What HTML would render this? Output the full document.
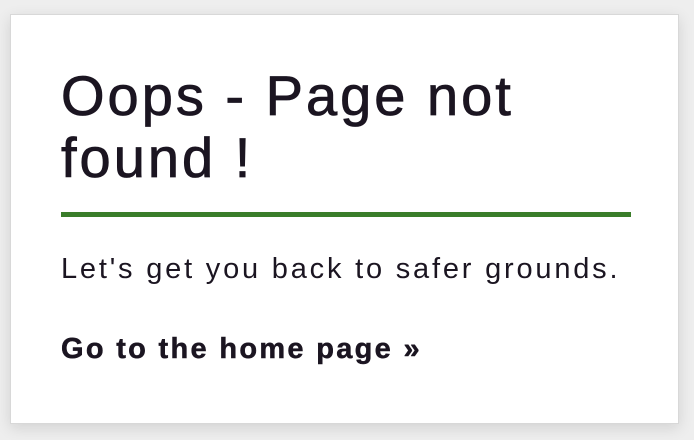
<!DOCTYPE html>
<html><head><style>
html,body{margin:0;padding:0;}
body{width:694px;height:440px;background:#eeeeee;position:relative;overflow:hidden;font-family:"Liberation Sans",sans-serif;color:#1b1521;}
.card{position:absolute;left:10px;top:14px;width:669px;height:410px;background:#fff;border:1px solid #d8d8d8;box-sizing:border-box;box-shadow:0 4px 14px rgba(0,0,0,0.12);}
h1{position:absolute;left:50px;top:50px;margin:0;font-size:56px;font-weight:normal;line-height:62px;letter-spacing:3px;white-space:nowrap;-webkit-text-stroke:0.8px #1b1521;}
.bar{position:absolute;left:50px;top:197px;width:570px;height:5px;background:#3a7d2a;}
p{position:absolute;left:50px;top:238px;margin:0;font-size:29px;letter-spacing:2.8px;white-space:nowrap;}
a{position:absolute;left:50px;top:318px;font-size:29px;font-weight:bold;color:#1b1521;text-decoration:none;white-space:nowrap;letter-spacing:2.3px;-webkit-text-stroke:0.5px #1b1521;}
</style></head><body>
<div class="card">
<h1>Oops - Page not<br>found !</h1>
<div class="bar"></div>
<p>Let's get you back to safer grounds.</p>
<a>Go to the home page »</a>
</div>
</body></html>
